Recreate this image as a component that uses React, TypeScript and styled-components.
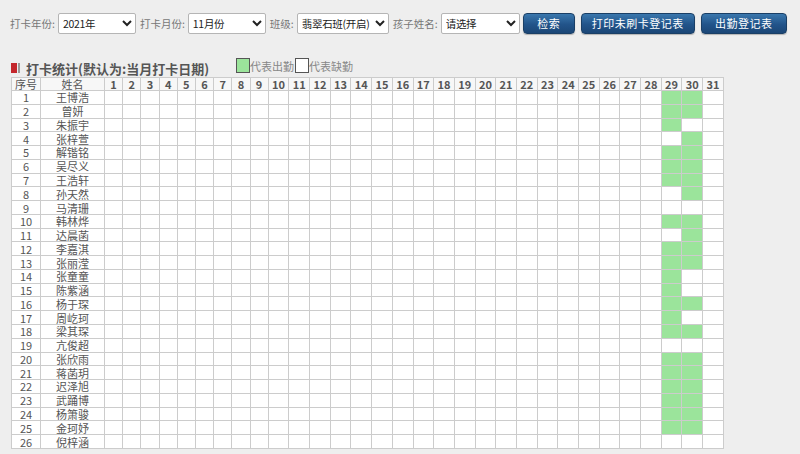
import React from "react"
import styled, { createGlobalStyle } from "styled-components"

const GlobalStyle = createGlobalStyle`
  html, body {
    margin: 0;
    padding: 0;
    background: #eeeeee;
    font-family: "Noto Sans CJK SC", "Noto Sans", sans-serif;
  }
`

const Page = styled.div`
  padding: 12px 10px 0 10px;
`

const Toolbar = styled.div`
  display: flex;
  align-items: center;
  height: 22px;
`

const FieldLabel = styled.span`
  font-size: 10.5px;
  color: #777;
  margin-right: 3px;
  white-space: nowrap;
`

const Select = styled.select<{ $w: number }>`
  width: ${(p) => p.$w}px;
  height: 21px;
  font-family: "Noto Sans CJK SC", "Noto Sans", sans-serif;
  font-size: 10.5px;
  letter-spacing: -0.3px;
  color: #222;
  background: #fff;
  border: 1px solid #b5b5b5;
  border-radius: 2px;
  padding: 0;
  margin-right: 4px;
`

const Button = styled.button<{ $w: number; $first?: boolean }>`
  width: ${(p) => p.$w}px;
  height: 21px;
  margin-left: ${(p) => (p.$first ? -1 : 6)}px;
  border: 1px solid #1a3f66;
  border-radius: 4px;
  background: linear-gradient(#3a77ad, #22548a 55%, #1b4676);
  color: #fff;
  font-family: "Noto Sans CJK SC", "Noto Sans", sans-serif;
  font-size: 11px;
  letter-spacing: 0.5px;
  padding: 0;
  box-shadow: 0 1px 1px rgba(0, 0, 0, 0.25);
`

const TitleRow = styled.div`
  display: flex;
  align-items: flex-end;
  margin-top: 24px;
  height: 19px;
  padding-left: 1px;
`

const TitleIcon = styled.span`
  display: inline-flex;
  gap: 1px;
  margin-right: 6px;
  margin-bottom: 4px;
`

const IconBar = styled.span<{ $c: string; $w: number }>`
  display: block;
  width: ${(p) => p.$w}px;
  height: 10px;
  background: ${(p) => p.$c};
`

const Title = styled.span`
  font-size: 13px;
  font-weight: bold;
  color: #555;
  line-height: 17px;
`

const Legend = styled.div`
  display: flex;
  align-items: flex-end;
  margin-left: 27px;
  margin-bottom: 4px;
`

const LegendBox = styled.span<{ $green?: boolean }>`
  display: block;
  width: 12px;
  height: 13px;
  border: 1px solid #555;
  background: ${(p) => (p.$green ? "#9be49b" : "#fff")};
`

const LegendText = styled.span`
  font-size: 11px;
  color: #888;
  line-height: 13px;
  margin-right: 1px;
`

const Table = styled.table`
  border-collapse: collapse;
  table-layout: fixed;
  width: 712px;
  margin-left: 1px;
  background: #fff;
`

const HeadCell = styled.th<{ $w: number; $plain?: boolean }>`
  width: ${(p) => p.$w}px;
  height: 12px;
  padding: 0;
  border: 1px solid #cccccc;
  font-size: 11px;
  line-height: 12px;
  font-weight: ${(p) => (p.$plain ? "normal" : "bold")};
  color: #555;
  text-align: center;
  background: #f7f7f7;
`

const Row = styled.tr`
  height: 13.77px;
`

const Cell = styled.td<{ $on?: boolean }>`
  padding: 0;
  border: 1px solid #cccccc;
  background: ${(p) => (p.$on ? "#9be49b" : "#fff")};
  font-size: 11px;
  line-height: 12px;
  color: #555;
  text-align: center;
  white-space: nowrap;
`

const names = [
  "王博浩", "曾妍", "朱振宇", "张梓萱", "解锴铭", "吴尽义", "王浩轩", "孙天然",
  "马清珊", "韩林烨", "达晨菡", "李嘉淇", "张丽滢", "张童童", "陈紫涵", "杨于琛",
  "周屹珂", "梁其琛", "亢俊超", "张欣雨", "蒋菡玥", "迟泽旭", "武踊博", "杨箫骏",
  "金珂妤", "倪梓涵",
]

// [day 29, day 30]
const attendance: [number, number][] = [
  [1, 1], [1, 1], [1, 0], [0, 1], [1, 1], [1, 1], [1, 1], [0, 1],
  [0, 0], [1, 1], [0, 1], [1, 1], [1, 1], [1, 0], [1, 0], [1, 1],
  [1, 0], [1, 1], [0, 0], [1, 1], [1, 1], [1, 1], [1, 1], [1, 1],
  [1, 1], [0, 0],
]

const days = Array.from({ length: 31 }, (_, i) => i + 1)

export default function App() {
  return (
    <Page>
      <GlobalStyle />
      <Toolbar>
        <FieldLabel>打卡年份:</FieldLabel>
        <Select $w={78} defaultValue="2021">
          <option value="2021">2021年</option>
        </Select>
        <FieldLabel>打卡月份:</FieldLabel>
        <Select $w={78} defaultValue="11">
          <option value="11">11月份</option>
        </Select>
        <FieldLabel>班级:</FieldLabel>
        <Select $w={92} defaultValue="a">
          <option value="a">翡翠石班(开启)</option>
        </Select>
        <FieldLabel>孩子姓名:</FieldLabel>
        <Select $w={79} defaultValue="">
          <option value="">请选择</option>
        </Select>
        <Button $w={52} $first>检索</Button>
        <Button $w={114}>打印未刷卡登记表</Button>
        <Button $w={86}>出勤登记表</Button>
      </Toolbar>

      <TitleRow>
        <TitleIcon>
          <IconBar $c="#c3262c" $w={6} />
          <IconBar $c="#9a9a9a" $w={2} />
        </TitleIcon>
        <Title>打卡统计(默认为:当月打卡日期)</Title>
        <Legend>
          <LegendBox $green />
          <LegendText>代表出勤</LegendText>
          <LegendBox />
          <LegendText>代表缺勤</LegendText>
        </Legend>
      </TitleRow>

      <Table>
        <thead>
          <tr>
            <HeadCell $w={28} $plain>序号</HeadCell>
            <HeadCell $w={63} $plain>姓名</HeadCell>
            {days.map((d) => (
              <HeadCell key={d} $w={d < 10 ? 17.2 : 19.7}>
                {d}
              </HeadCell>
            ))}
          </tr>
        </thead>
        <tbody>
          {names.map((name, i) => (
            <Row key={i}>
              <Cell>{i + 1}</Cell>
              <Cell>{name}</Cell>
              {days.map((d) => (
                <Cell
                  key={d}
                  $on={(d === 29 && attendance[i][0] === 1) || (d === 30 && attendance[i][1] === 1)}
                />
              ))}
            </Row>
          ))}
        </tbody>
      </Table>
    </Page>
  )
}
